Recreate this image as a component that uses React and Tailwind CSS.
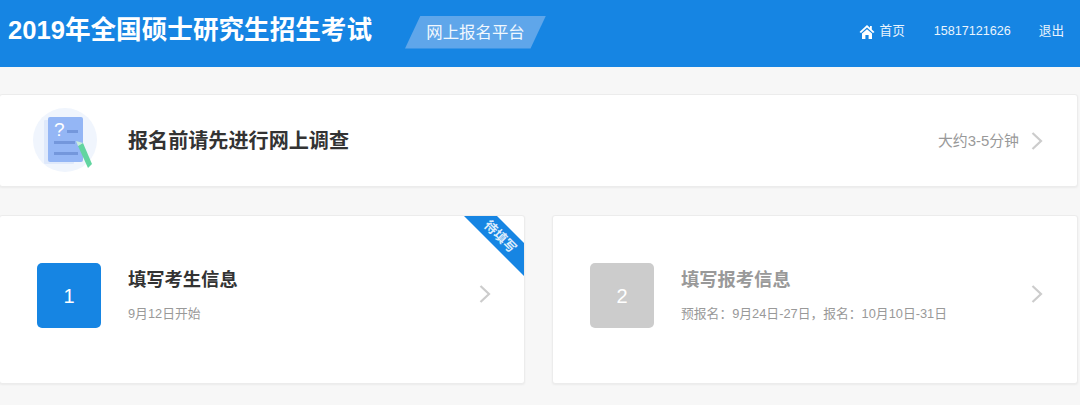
const font = "font-['Liberation_Sans','Noto_Sans_CJK_SC',sans-serif]"

function Arrow({ className }) {
  return (
    <svg width="12" height="18" viewBox="0 0 12 18" fill="none" stroke="#cccccc" strokeWidth="2.2" className={className}>
      <path d="M1.5 1 L10 9 L1.5 17" />
    </svg>
  )
}

function SurveyIcon() {
  return (
    <svg width="66" height="66" viewBox="0 0 66 66">
      <circle cx="32" cy="32" r="32" fill="#f0f5fd" />
      <rect x="11" y="12" width="30" height="44" rx="1" fill="#dfe9fb" />
      <rect x="15" y="9" width="35" height="45" rx="2" fill="#94b6f5" />
      <text x="21" y="28" fontSize="19" fill="#ffffff" fontFamily="Liberation Sans">?</text>
      <rect x="34" y="22" width="11" height="3" fill="#7497dc" />
      <rect x="21" y="33" width="21" height="3" fill="#7497dc" />
      <rect x="21" y="44" width="24" height="3" fill="#7497dc" />
      <path d="M45 38 L50 35 L59 56 L55 60 Z" fill="#62d5a0" />
      <path d="M43 33 L50 35 L45 38 Z" fill="#c9efdc" />
    </svg>
  )
}

export default function App() {
  return (
    <div className={`w-[1080px] h-[405px] overflow-hidden bg-[#f7f7f7] ${font}`}>
      <header className="h-[67px] bg-[#1685e3] flex items-center pl-[8px] pr-[16px] text-white">
        <h1 className="text-[25.6px] font-bold leading-none mb-[6px] w-[397px] shrink-0 whitespace-nowrap">2019年全国硕士研究生招生考试</h1>
        <div className="w-[141px] h-[33px] mb-[3px] bg-[#5fa6ea] [clip-path:polygon(11%_0,100%_0,89%_100%,0_100%)] flex items-center justify-center text-[16.4px] text-[#f2f8fe]">
          网上报名平台
        </div>
        <nav className="ml-auto flex items-center text-[12.6px] text-[#eaf4fd] mb-[5px]">
          <svg width="16" height="16" viewBox="0 0 16 16" className="mr-[5px] mt-[2px]" fill="#ffffff">
            <path d="M8 1 L0.5 8 L2 9 L8 3.6 L14 9 L15.5 8 L12.8 5.4 V2 H11 V3.8 Z" />
            <path d="M3 9.6 L8 5.2 L13 9.6 V15 H9.6 V11 H6.4 V15 H3 Z" />
          </svg>
          <span>首页</span>
          <span className="ml-[29px]">15817121626</span>
          <span className="ml-[28px]">退出</span>
        </nav>
      </header>

      <main className="pt-[27px] pr-[2px]">
        <section className="h-[93px] -ml-px bg-white border border-[#ececec] rounded-[3px] shadow-[0_1px_2px_rgba(0,0,0,0.05)] flex items-center pl-[33px] pr-[34px]">
          <SurveyIcon />
          <div className="ml-[29px] mt-[1px] text-[20.1px] font-bold text-[#333333]">报名前请先进行网上调查</div>
          <div className="ml-auto mt-[1px] flex items-center text-[14.9px] text-[#999999]">
            <span className="mr-[12px]">大约3-5分钟</span>
            <Arrow />
          </div>
        </section>

        <div className="mt-[28px] flex gap-[27px]">
          <section className="relative -ml-px w-[526px] h-[169px] bg-white border border-[#ececec] rounded-[3px] shadow-[0_1px_2px_rgba(0,0,0,0.05)] flex items-center pl-[37px] pr-[33px] pb-[8px] overflow-hidden">
            <div className="w-[64px] h-[65px] rounded-[5px] bg-[#1685e3] text-white text-[20px] flex items-center justify-center shrink-0">1</div>
            <div className="ml-[27px] mb-[2px]">
              <div className="text-[18.3px] font-bold text-[#333333] leading-[26px]">填写考生信息</div>
              <div className="text-[12.8px] text-[#999999] mt-[12px] leading-[18px]">9月12日开始</div>
            </div>
            <Arrow className="ml-auto mb-[3px]" />
            <div className="absolute top-0 right-0 w-[60px] h-[60px] bg-[#1685e3] [clip-path:polygon(0_0,55%_0,100%_45%,100%_100%)]" />
            <div className="absolute top-[14px] right-[-2px] w-[52px] text-center text-[13px] font-bold leading-[14px] text-[#dcecfb] rotate-45">待填写</div>
          </section>

          <section className="flex-1 h-[169px] bg-white border border-[#ececec] rounded-[3px] shadow-[0_1px_2px_rgba(0,0,0,0.05)] flex items-center pl-[37px] pr-[34px] pb-[8px]">
            <div className="w-[64px] h-[65px] rounded-[5px] bg-[#cccccc] text-white text-[20px] flex items-center justify-center shrink-0">2</div>
            <div className="ml-[27px] mb-[2px]">
              <div className="text-[18.3px] font-bold text-[#999999] leading-[26px]">填写报考信息</div>
              <div className="text-[12.8px] text-[#999999] mt-[12px] leading-[18px]">预报名：9月24日-27日，报名：10月10日-31日</div>
            </div>
            <Arrow className="ml-auto mb-[3px]" />
          </section>
        </div>
      </main>
    </div>
  )
}
